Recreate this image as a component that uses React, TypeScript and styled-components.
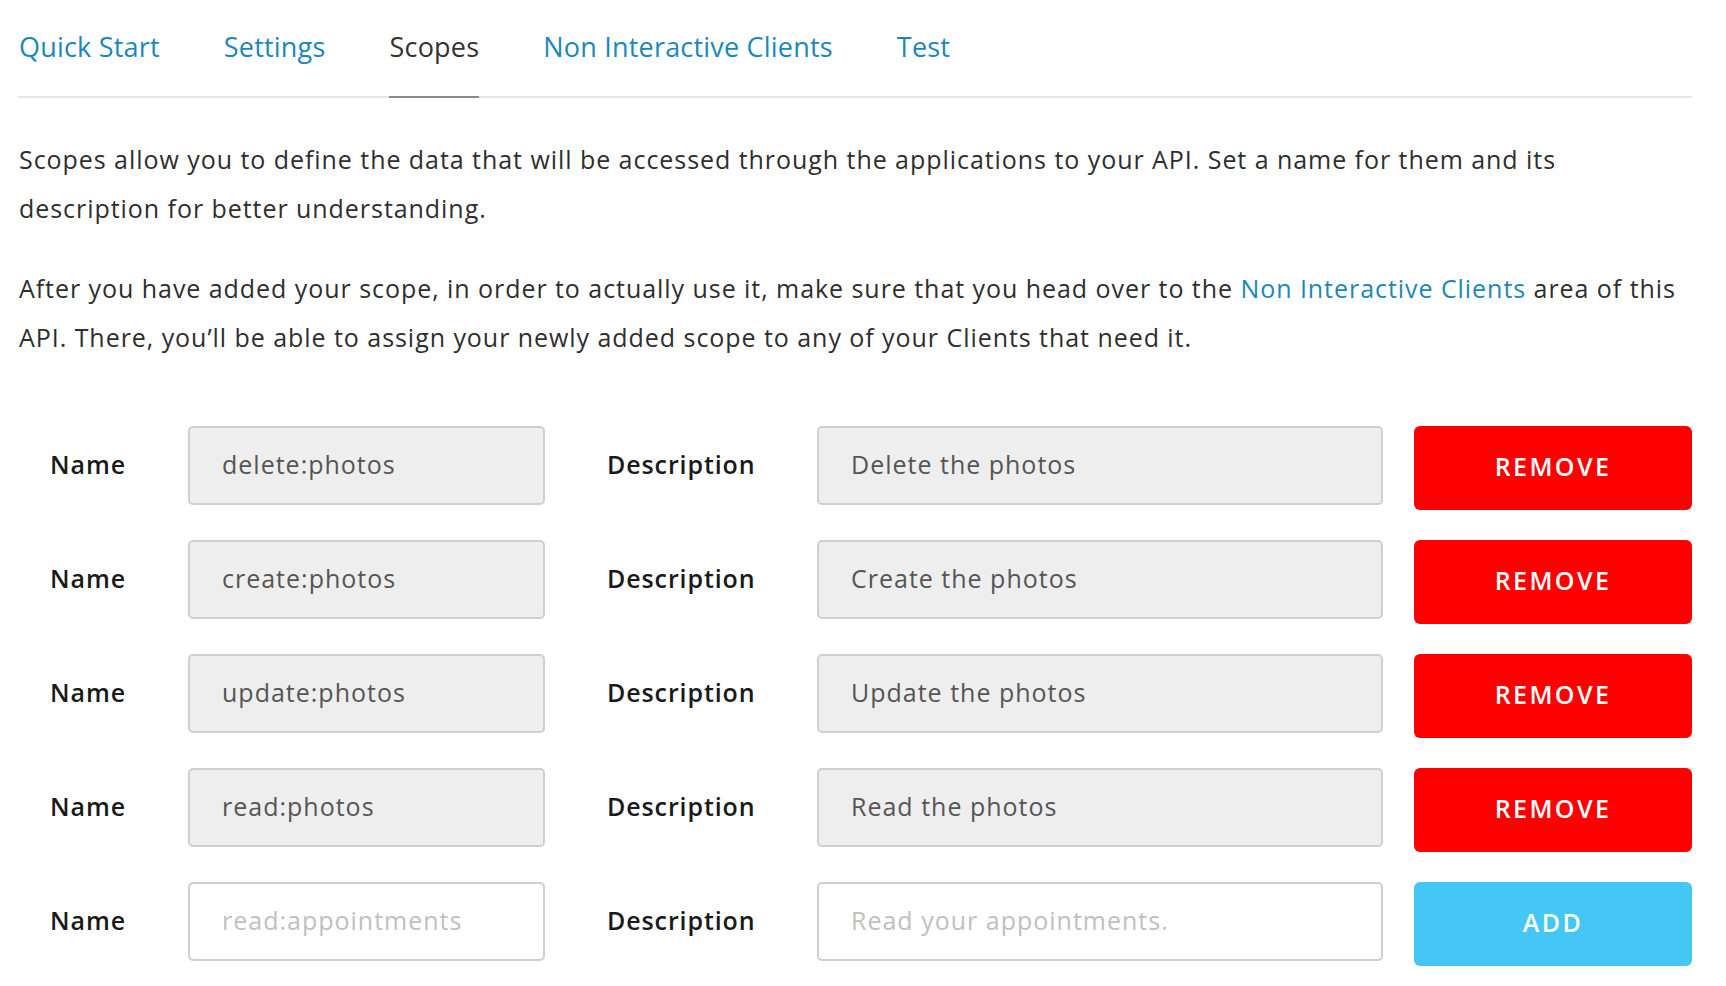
import React, { useState } from "react";
import styled, { createGlobalStyle } from "styled-components";

const font = `"Open Sans", Lato, "Liberation Sans", sans-serif`;

const GlobalStyle = createGlobalStyle`
  html, body {
    margin: 0;
    padding: 0;
    background: #ffffff;
  }
  body {
    font-family: ${font};
    color: #333333;
  }
  * {
    box-sizing: border-box;
  }
`;

const Root = styled.div`
  padding: 0 34px 0 18px;
  width: 1726px;
`;

const Tabs = styled.nav`
  display: flex;
  align-items: flex-end;
  height: 98px;
  border-bottom: 2px solid #e5e5e5;
  gap: 63px;
`;

const Tab = styled.a<{ $active?: boolean }>`
  display: flex;
  align-items: center;
  height: 96px;
  margin-bottom: -2px;
  padding: 0 0 5px 1px;
  font-size: 27px;
  letter-spacing: 0.2px;
  color: ${(p) => (p.$active ? "#333333" : "#1c87b8")};
  border-bottom: 2px solid ${(p) => (p.$active ? "#8a8a8a" : "transparent")};
  text-decoration: none;
  cursor: pointer;
`;

const Intro = styled.div`
  padding: 37px 0 0 1px;
`;

const Paragraph = styled.p`
  margin: 0 0 31px;
  font-size: 25px;
  line-height: 49px;
  letter-spacing: 0.95px;
  color: #2e2e2e;
`;

const Link = styled.a`
  color: #1c87b8;
  text-decoration: none;
`;

const Rows = styled.div`
  display: flex;
  flex-direction: column;
  gap: 30px;
  padding-top: 33px;
`;

const Row = styled.div`
  display: flex;
  align-items: flex-start;
  height: 84px;
`;

const Label = styled.label<{ $width: number; $pad: number }>`
  width: ${(p) => p.$width}px;
  padding: 0 0 4px ${(p) => p.$pad}px;
  height: 79px;
  display: flex;
  align-items: center;
  font-size: 25px;
  font-weight: 600;
  letter-spacing: 0.9px;
  color: #1a1a1a;
`;

const Field = styled.input<{ $width: number; $filled: boolean }>`
  width: ${(p) => p.$width}px;
  height: 79px;
  padding: 0 0 4px 32px;
  border: 2px solid #cfcfcf;
  border-radius: 5px;
  background: ${(p) => (p.$filled ? "#eeeeee" : "#ffffff")};
  font-family: ${font};
  font-size: 25px;
  letter-spacing: 1px;
  color: #555555;
  outline: none;
  &::placeholder {
    color: #c0c0c0;
  }
`;

const ActionButton = styled.button<{ $variant: "remove" | "add" }>`
  width: 278px;
  height: 84px;
  margin-left: 31px;
  padding: 0 0 5px;
  border: none;
  border-radius: 6px;
  background: ${(p) => (p.$variant === "remove" ? "#ff0000" : "#45c7f5")};
  color: #ffffff;
  font-family: ${font};
  font-size: 25px;
  font-weight: 600;
  letter-spacing: 2.4px;
  cursor: pointer;
`;

type Scope = { name: string; description: string };

const initialScopes: Scope[] = [
  { name: "delete:photos", description: "Delete the photos" },
  { name: "create:photos", description: "Create the photos" },
  { name: "update:photos", description: "Update the photos" },
  { name: "read:photos", description: "Read the photos" },
];

const tabs = ["Quick Start", "Settings", "Scopes", "Non Interactive Clients", "Test"];

export default function App() {
  const [scopes, setScopes] = useState(initialScopes);
  const [name, setName] = useState("");
  const [description, setDescription] = useState("");

  function onAdd() {
    if (!name) return;
    setScopes([...scopes, { name, description }]);
    setName("");
    setDescription("");
  }

  return (
    <Root>
      <GlobalStyle />
      <Tabs>
        {tabs.map((t) => (
          <Tab key={t} $active={t === "Scopes"}>
            {t}
          </Tab>
        ))}
      </Tabs>
      <Intro>
        <Paragraph>
          Scopes allow you to define the data that will be accessed through the
          applications to your API. Set a name for them and its description for
          better understanding.
        </Paragraph>
        <Paragraph>
          After you have added your scope, in order to actually use it, make
          sure that you head over to the <Link>Non Interactive Clients</Link>{" "}
          area of this API. There, you’ll be able to assign your newly added
          scope to any of your Clients that need it.
        </Paragraph>
      </Intro>
      <Rows>
        {scopes.map((s, i) => (
          <Row key={s.name + i}>
            <Label $width={170} $pad={32}>Name</Label>
            <Field $width={357} $filled readOnly value={s.name} />
            <Label $width={272} $pad={62}>Description</Label>
            <Field $width={566} $filled readOnly value={s.description} />
            <ActionButton
              $variant="remove"
              onClick={() => setScopes(scopes.filter((_, j) => j !== i))}
            >
              REMOVE
            </ActionButton>
          </Row>
        ))}
        <Row>
          <Label $width={170} $pad={32}>Name</Label>
          <Field
            $width={357}
            $filled={false}
            placeholder="read:appointments"
            value={name}
            onChange={(e) => setName(e.target.value)}
          />
          <Label $width={272} $pad={62}>Description</Label>
          <Field
            $width={566}
            $filled={false}
            placeholder="Read your appointments."
            value={description}
            onChange={(e) => setDescription(e.target.value)}
          />
          <ActionButton $variant="add" onClick={onAdd}>
            ADD
          </ActionButton>
        </Row>
      </Rows>
    </Root>
  );
}
